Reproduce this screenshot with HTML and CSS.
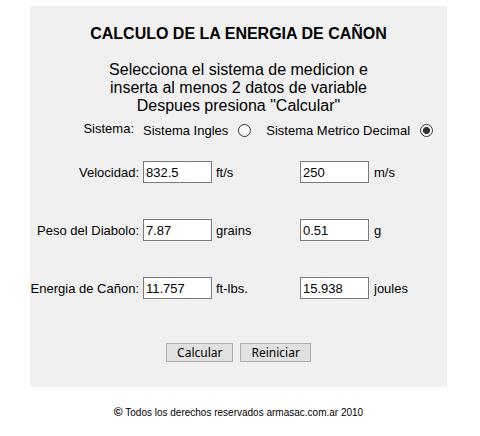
FILE: index.html
```html
<!DOCTYPE html>
<html lang="es">
<head>
  <meta charset="UTF-8">
  <title>Calculo de la energia de cañon</title>
  <link rel="stylesheet" href="styles.css">
</head>
<body>
  <!-- caja principal -->
  <div class="panel">
    <h1 class="titulo">CALCULO DE LA ENERGIA DE CAÑON</h1>
    <p class="intro">Selecciona el sistema de medicion e<br>inserta al menos 2 datos de variable<br>Despues presiona "Calcular"</p>

    <div class="sistema">
      <span class="sistema-label">Sistema:</span>
      <label for="ingles">Sistema Ingles</label>
      <input type="radio" name="sistema" id="ingles" class="radio">
      <label for="metrico" class="metrico">Sistema Metrico Decimal</label>
      <input type="radio" name="sistema" id="metrico" class="radio" checked>
    </div>

    <div class="campo">
      <span class="etiqueta">Velocidad:</span>
      <input type="text" class="dato" id="vel-ft" value="832.5">
      <span class="unidad">ft/s</span>
      <input type="text" class="dato" id="vel-m" value="250">
      <span class="unidad-der">m/s</span>
    </div>

    <div class="campo peso">
      <span class="etiqueta">Peso del Diabolo:</span>
      <input type="text" class="dato" id="peso-gr" value="7.87">
      <span class="unidad">grains</span>
      <input type="text" class="dato" id="peso-g" value="0.51">
      <span class="unidad-der">g</span>
    </div>

    <div class="campo energia">
      <span class="etiqueta">Energia de Cañon:</span>
      <input type="text" class="dato" id="ene-ft" value="11.757">
      <span class="unidad">ft-lbs.</span>
      <input type="text" class="dato" id="ene-j" value="15.938">
      <span class="unidad-der">joules</span>
    </div>

    <div class="botones">
      <button type="button" onclick="calcular()">Calcular</button>
      <button type="button" onclick="reiniciar()">Reiniciar</button>
    </div>
  </div>

  <p class="pie"><span class="copy">&copy;</span> Todos los derechos reservados armasac.com.ar 2010</p>

  <script>
    // E = m * v^2 / 2 (sistema metrico)
    function calcular() {
      const v = parseFloat(document.getElementById("vel-m").value);
      const m = parseFloat(document.getElementById("peso-g").value) / 1000;
      if (!isNaN(v) && !isNaN(m)) {
        const joules = m * v * v / 2;
        document.getElementById("ene-j").value = joules.toFixed(3);
        document.getElementById("ene-ft").value = (joules * 0.737562).toFixed(3);
      }
    }

    function reiniciar() {
      document.querySelectorAll(".dato").forEach((el) => (el.value = ""));
    }
  </script>
</body>
</html>
```

FILE: styles.css
```css
/* base */
body {
  margin: 0;
  font-family: "Liberation Sans", Arial, sans-serif;
  color: #000;
  background: #fff;
}

.panel {
  width: 417px;
  margin: 6px 0 0 30px;
  padding: 19px 0 25px;
  background: #f0f0f0;
}

.titulo {
  margin: 0;
  font-size: 16px;
  line-height: 18px;
  font-weight: bold;
  text-align: center;
}

.intro {
  margin: 18px 0 0;
  font-size: 16px;
  line-height: 18px;
  text-align: center;
}

/* selector de sistema */
.sistema {
  display: flex;
  align-items: center;
  height: 15px;
  margin-top: 8px;
  font-size: 13px;
  line-height: 15px;
}

.sistema-label {
  width: 104px;
  margin-right: 9px;
  margin-top: -4px;
  text-align: right;
}

.metrico {
  margin-left: 15px;
}

.radio {
  appearance: none;
  -webkit-appearance: none;
  width: 13px;
  height: 13px;
  margin: 0 0 0 10px;
  border: 1px solid #333;
  border-radius: 50%;
  background: #fff;
}

.radio:checked {
  background: radial-gradient(circle, #333 0 3.3px, #fff 3.8px);
}

/* filas de datos */
.campo {
  display: flex;
  align-items: center;
  margin-top: 23px;
  font-size: 13px;
}

.campo.peso {
  margin-top: 36px;
}

.campo.energia {
  margin-top: 36px;
}

.etiqueta {
  width: 109px;
  margin-right: 4px;
  text-align: right;
}

.dato {
  box-sizing: border-box;
  width: 69px;
  height: 22px;
  margin: 0;
  padding: 0 2px;
  border: 1px solid #7a7a7a;
  background: #fff;
  font-family: "Liberation Sans", Arial, sans-serif;
  font-size: 13px;
  color: #000;
}

.unidad {
  width: 84px;
  margin-left: 4px;
}

.unidad-der {
  margin-left: 5px;
}

/* botones */
.botones {
  display: flex;
  justify-content: center;
  gap: 7px;
  margin-top: 44px;
}

.botones button {
  height: 19px;
  padding: 0 10px;
  border: 1px solid #adadad;
  background: #e1e1e1;
  font-family: "Noto Sans", sans-serif;
  font-size: 12px;
  line-height: 17px;
  color: #000;
}

/* pie */
.pie {
  width: 417px;
  margin: 19px 0 0 30px;
  font-size: 10px;
  line-height: 12px;
  text-align: center;
}

.copy {
  font-size: 12px;
  font-weight: bold;
}
```
